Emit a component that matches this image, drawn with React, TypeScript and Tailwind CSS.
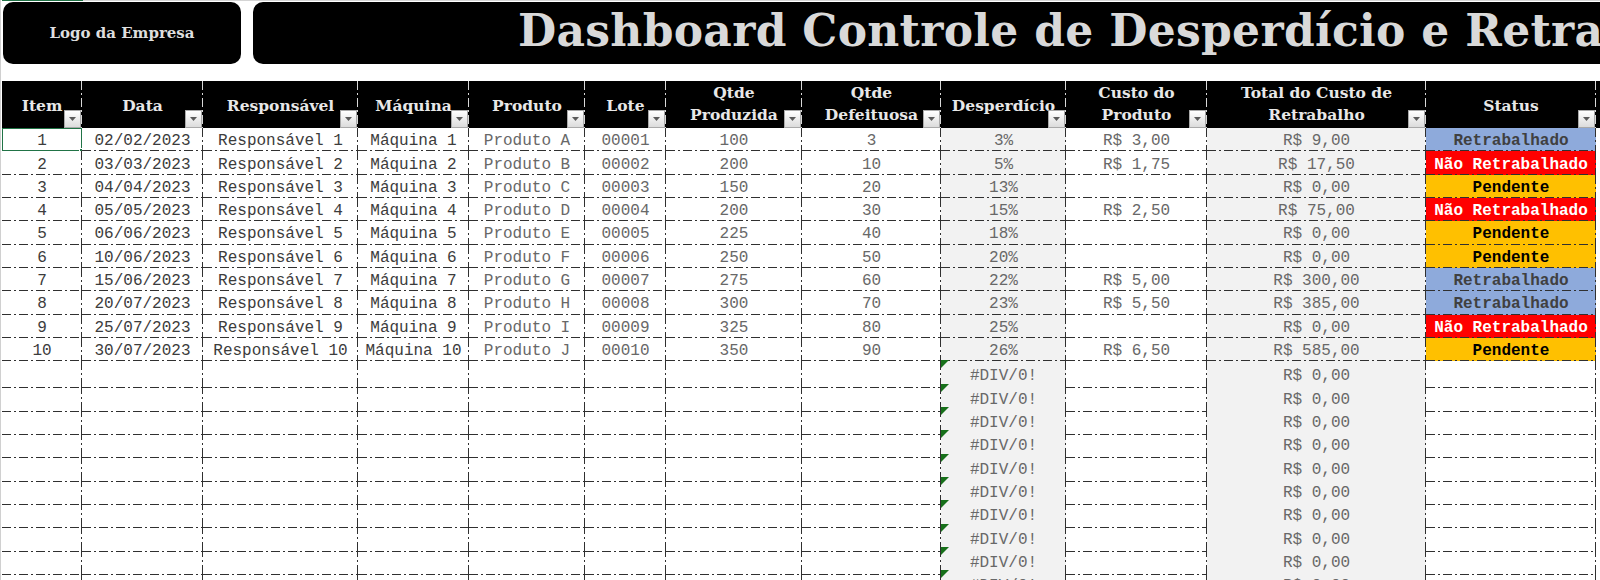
import type { ReactNode } from "react";

type Status = "Retrabalhado" | "Não Retrabalhado" | "Pendente";

type Row = {
  item: number;
  data: string;
  resp: string;
  maq: string;
  prod: string;
  lote: string;
  produzida: number;
  defeituosa: number;
  desp: string;
  custo: string;
  total: string;
  status: Status;
};

const ROWS: Row[] = [
  { item: 1, data: "02/02/2023", resp: "Responsável 1", maq: "Máquina 1", prod: "Produto A", lote: "00001", produzida: 100, defeituosa: 3, desp: "3%", custo: "R$ 3,00", total: "R$ 9,00", status: "Retrabalhado" },
  { item: 2, data: "03/03/2023", resp: "Responsável 2", maq: "Máquina 2", prod: "Produto B", lote: "00002", produzida: 200, defeituosa: 10, desp: "5%", custo: "R$ 1,75", total: "R$ 17,50", status: "Não Retrabalhado" },
  { item: 3, data: "04/04/2023", resp: "Responsável 3", maq: "Máquina 3", prod: "Produto C", lote: "00003", produzida: 150, defeituosa: 20, desp: "13%", custo: "", total: "R$ 0,00", status: "Pendente" },
  { item: 4, data: "05/05/2023", resp: "Responsável 4", maq: "Máquina 4", prod: "Produto D", lote: "00004", produzida: 200, defeituosa: 30, desp: "15%", custo: "R$ 2,50", total: "R$ 75,00", status: "Não Retrabalhado" },
  { item: 5, data: "06/06/2023", resp: "Responsável 5", maq: "Máquina 5", prod: "Produto E", lote: "00005", produzida: 225, defeituosa: 40, desp: "18%", custo: "", total: "R$ 0,00", status: "Pendente" },
  { item: 6, data: "10/06/2023", resp: "Responsável 6", maq: "Máquina 6", prod: "Produto F", lote: "00006", produzida: 250, defeituosa: 50, desp: "20%", custo: "", total: "R$ 0,00", status: "Pendente" },
  { item: 7, data: "15/06/2023", resp: "Responsável 7", maq: "Máquina 7", prod: "Produto G", lote: "00007", produzida: 275, defeituosa: 60, desp: "22%", custo: "R$ 5,00", total: "R$ 300,00", status: "Retrabalhado" },
  { item: 8, data: "20/07/2023", resp: "Responsável 8", maq: "Máquina 8", prod: "Produto H", lote: "00008", produzida: 300, defeituosa: 70, desp: "23%", custo: "R$ 5,50", total: "R$ 385,00", status: "Retrabalhado" },
  { item: 9, data: "25/07/2023", resp: "Responsável 9", maq: "Máquina 9", prod: "Produto I", lote: "00009", produzida: 325, defeituosa: 80, desp: "25%", custo: "", total: "R$ 0,00", status: "Não Retrabalhado" },
  { item: 10, data: "30/07/2023", resp: "Responsável 10", maq: "Máquina 10", prod: "Produto J", lote: "00010", produzida: 350, defeituosa: 90, desp: "26%", custo: "R$ 6,50", total: "R$ 585,00", status: "Pendente" },
];

const STATUS_STYLE: Record<Status, string> = {
  Retrabalhado: "bg-[#8eaadb] text-[#404040]",
  "Não Retrabalhado": "bg-[#ff0000] text-white",
  Pendente: "bg-[#ffc000] text-black",
};

const COLS =
  "grid grid-cols-[80px_121px_155px_111px_116px_81px_136px_139px_125px_141px_219px_170px]";

// excel "dash dot" border, drawn on the right and bottom edge of each cell
const LINE =
  "bg-no-repeat bg-[image:repeating-linear-gradient(90deg,#303030_0_9px,transparent_9px_12px,#303030_12px_14px,transparent_14px_17px),repeating-linear-gradient(180deg,#303030_0_9px,transparent_9px_12px,#303030_12px_14px,transparent_14px_17px)] bg-[length:100%_1px,1px_100%] bg-[position:0_100%,100%_0]";

const HEAD_LINE =
  "bg-no-repeat bg-[image:repeating-linear-gradient(180deg,#d8d8d8_0_9px,transparent_9px_12px,#d8d8d8_12px_14px,transparent_14px_17px)] bg-[length:1px_100%] bg-[position:100%_0]";

const DARK = "text-[#3c3c3c]";
const LIGHT = "text-[#686868]";

function FilterButton() {
  return (
    <div className="absolute right-[1px] bottom-0 flex h-[18px] w-[17px] items-center justify-center border border-[#a9a9a9] bg-linear-to-b from-white to-[#dcdcdc]">
      <svg width="7" height="4" viewBox="0 0 7 4">
        <polygon points="0,0 7,0 3.5,4" fill="#5a5a5a" />
      </svg>
    </div>
  );
}

function HeadCell({ children, multi = false }: { children: ReactNode; multi?: boolean }) {
  return (
    <div
      className={`${HEAD_LINE} relative flex items-center justify-center text-center leading-[22px] ${
        multi ? "pb-[1px]" : "pt-[3px]"
      }`}
    >
      <span>{children}</span>
      <FilterButton />
    </div>
  );
}

function Cell({
  children,
  className = "",
}: {
  children?: ReactNode;
  className?: string;
}) {
  return (
    <div
      className={`${LINE} relative flex items-center justify-center overflow-hidden whitespace-nowrap pt-[3px] ${className}`}
    >
      {children}
    </div>
  );
}

function ErrorFlag() {
  return (
    <svg className="absolute -top-[1px] left-0" width="8" height="8" viewBox="0 0 8 8">
      <polygon points="0,0 8,0 0,8" fill="#17701a" />
    </svg>
  );
}

export default function App() {
  const empty = Array.from({ length: 10 }, (_, i) => i);

  return (
    <div className="h-[580px] w-[1600px] overflow-hidden border-l border-[#d0d0d0] bg-white pl-[1px] font-['Liberation_Mono',monospace] text-[16px]">
      {/* top gridline strip */}
      <div className="flex h-[1px]">
        <div className="w-[81px] bg-[#217346]" />
        <div className="flex-1 bg-[#d4d4d4]" />
      </div>

      {/* banner */}
      <div className="mt-[1px] flex h-[62px] gap-[12px] pl-[1px] font-['DejaVu_Serif',serif] font-bold">
        <div className="flex w-[238px] shrink-0 items-center justify-center rounded-[10px] bg-black text-[15px] text-[#dedede]">
          Logo da Empresa
        </div>
        <div className="min-w-0 flex-1 overflow-hidden whitespace-nowrap rounded-l-[10px] bg-black pl-[265px] text-[44px] leading-[57px] tracking-[0.3px] text-[#d9d9d9]">
          Dashboard Controle de Desperdício e Retrabalho
        </div>
      </div>

      {/* table */}
      <div className="mt-[17px]">
        <div className={`${COLS} h-[47px] bg-black font-['DejaVu_Serif',serif] text-[15.5px] font-bold text-[#e8e8e8]`}>
          <HeadCell>Item</HeadCell>
          <HeadCell>Data</HeadCell>
          <HeadCell>Responsável</HeadCell>
          <HeadCell>Máquina</HeadCell>
          <HeadCell>Produto</HeadCell>
          <HeadCell>Lote</HeadCell>
          <HeadCell multi>
            Qtde
            <br />
            Produzida
          </HeadCell>
          <HeadCell multi>
            Qtde
            <br />
            Defeituosa
          </HeadCell>
          <HeadCell>Desperdício</HeadCell>
          <HeadCell multi>
            Custo do
            <br />
            Produto
          </HeadCell>
          <HeadCell multi>
            Total do Custo de
            <br />
            Retrabalho
          </HeadCell>
          <HeadCell>Status</HeadCell>
        </div>

        {ROWS.map((r) => (
          <div key={r.item} className={`${COLS} h-[23.33px]`}>
            <Cell className={DARK}>
              {r.item}
              {r.item === 1 && (
                <>
                  <div className="absolute -inset-[1px] border-2 border-[#217346]" />
                  <div className="absolute -right-[3px] -bottom-[3px] size-[6px] border border-white bg-[#217346]" />
                </>
              )}
            </Cell>
            <Cell className={DARK}>{r.data}</Cell>
            <Cell className={DARK}>{r.resp}</Cell>
            <Cell className={DARK}>{r.maq}</Cell>
            <Cell className={LIGHT}>{r.prod}</Cell>
            <Cell className={LIGHT}>{r.lote}</Cell>
            <Cell className={LIGHT}>{r.produzida}</Cell>
            <Cell className={LIGHT}>{r.defeituosa}</Cell>
            <Cell className={`bg-[#f2f2f2] ${LIGHT}`}>{r.desp}</Cell>
            <Cell className={LIGHT}>{r.custo}</Cell>
            <Cell className={`bg-[#f2f2f2] ${LIGHT}`}>{r.total}</Cell>
            <Cell className={`font-bold ${STATUS_STYLE[r.status]}`}>{r.status}</Cell>
          </div>
        ))}

        {empty.map((i) => (
          <div key={`e${i}`} className={`${COLS} h-[23.33px]`}>
            <Cell />
            <Cell />
            <Cell />
            <Cell />
            <Cell />
            <Cell />
            <Cell />
            <Cell />
            <Cell className={`overflow-visible bg-[#f2f2f2] ${LIGHT}`}>
              <ErrorFlag />
              #DIV/0!
            </Cell>
            <Cell />
            <Cell className={`bg-[#f2f2f2] ${LIGHT}`}>R$ 0,00</Cell>
            <Cell />
          </div>
        ))}
      </div>
    </div>
  );
}
